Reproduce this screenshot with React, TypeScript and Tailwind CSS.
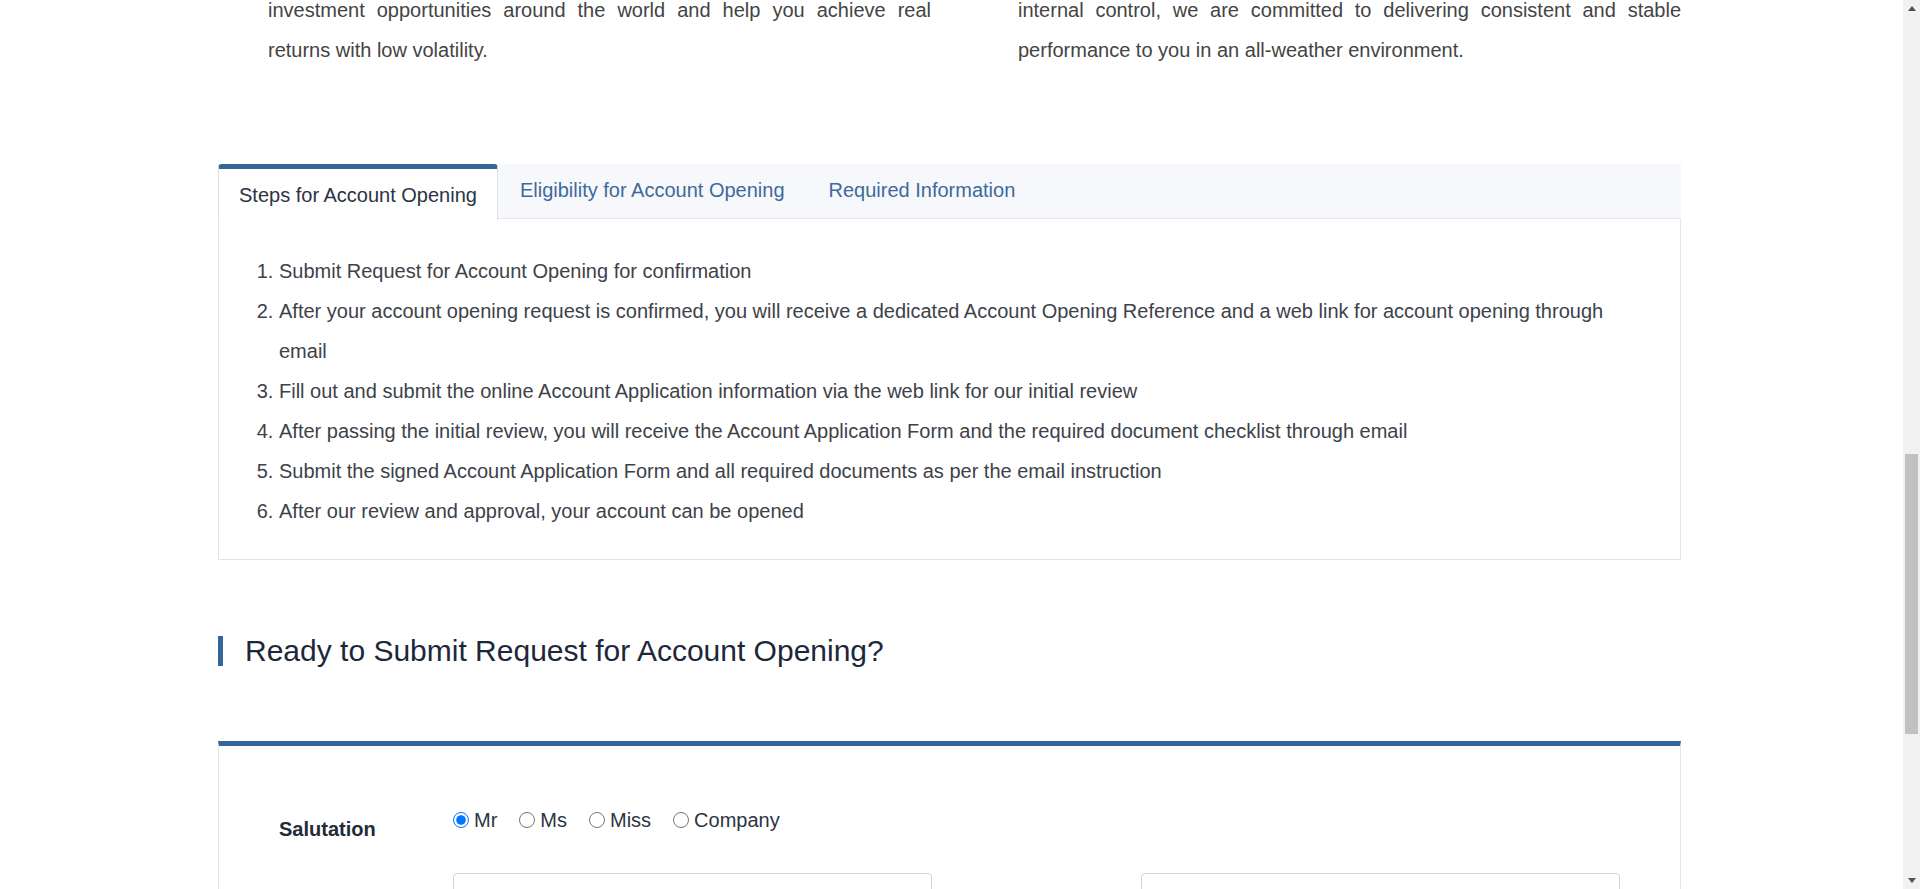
import React, { useState } from 'react';

const steps = [
  'Submit Request for Account Opening for confirmation',
  'After your account opening request is confirmed, you will receive a dedicated Account Opening Reference and a web link for account opening through email',
  'Fill out and submit the online Account Application information via the web link for our initial review',
  'After passing the initial review, you will receive the Account Application Form and the required document checklist through email',
  'Submit the signed Account Application Form and all required documents as per the email instruction',
  'After our review and approval, your account can be opened',
];

const tabs = ['Steps for Account Opening', 'Eligibility for Account Opening', 'Required Information'];
const salutations = ['Mr', 'Ms', 'Miss', 'Company'];

const Scrollbar: React.FC = () => (
  <div className="flex w-[17px] shrink-0 flex-col bg-[#f1f1f1]">
    <div className="flex h-[17px] items-center justify-center">
      <div className="h-0 w-0 border-x-[4px] border-b-[5px] border-x-transparent border-b-[#505050]" />
    </div>
    <div className="flex-1 px-[2px] pt-[437px]">
      <div className="h-[280px] bg-[#c1c1c1]" />
    </div>
    <div className="flex h-[17px] items-center justify-center">
      <div className="h-0 w-0 border-x-[4px] border-t-[5px] border-x-transparent border-t-[#505050]" />
    </div>
  </div>
);

const App: React.FC = () => {
  const [active, setActive] = useState(0);
  const [salutation, setSalutation] = useState('Mr');

  return (
    <div className="flex h-[889px] overflow-hidden bg-white font-['Liberation_Sans',Arial,sans-serif]">
      <main className="flex-1 overflow-hidden">
        <div className="ml-[218px] w-[1463px]">
          {/* intro columns (tail end) */}
          <div className="mt-[-10px] flex justify-between text-[20px] leading-[40px] text-[#444]">
            <div className="ml-[50px] w-[663px]">
              <p className="text-justify [text-align-last:justify]">
                investment opportunities around the world and help you achieve real
              </p>
              <p>returns with low volatility.</p>
            </div>
            <div className="w-[663px]">
              <p className="text-justify [text-align-last:justify]">
                internal control, we are committed to delivering consistent and stable
              </p>
              <p>performance to you in an all-weather environment.</p>
            </div>
          </div>

          {/* tabs */}
          <div className="mt-[94px]">
            <div className="flex h-[55px] items-start border-b border-[#e3e5ea] bg-[#f7f8fb]">
              {tabs.map((t, i) =>
                i === active ? (
                  <button
                    key={t}
                    onClick={() => setActive(i)}
                    className="flex h-[56px] items-center rounded-t-[4px] border-x border-t-[5px] border-x-[#dde0e5] border-t-[#34669a] bg-white px-5 text-[20px] text-[#2b3443]"
                  >
                    {t}
                  </button>
                ) : (
                  <button
                    key={t}
                    onClick={() => setActive(i)}
                    className="flex h-[52px] items-center px-[22px] text-[20px] text-[#3d6a9c]"
                  >
                    {t}
                  </button>
                )
              )}
            </div>
            <div className="border-x border-b border-[#e3e5ea] pt-8 pr-[50px] pb-7 pl-5">
              <ol className="list-decimal pl-10 text-[20px] leading-[40px] text-[#3d424a]">
                {steps.map((s) => (
                  <li key={s}>{s}</li>
                ))}
              </ol>
            </div>
          </div>

          {/* heading */}
          <h2 className="mt-[76px] border-l-[5px] border-[#34669a] pl-[22px] text-[30px] leading-[30px] text-[#1c283a]">
            Ready to Submit Request for Account Opening?
          </h2>

          {/* form */}
          <div className="mt-[75px] border-x border-t-[5px] border-x-[#e3e5ea] border-t-[#34669a] px-[60px] pt-[62px]">
            <div className="flex items-start">
              <div className="mt-[9px] w-[174px] text-[20px] leading-[24px] font-bold text-[#222b38]">
                Salutation
              </div>
              <div className="flex items-center text-[20px] leading-[24px] text-[#2b3443]">
                {salutations.map((s) => (
                  <label key={s} className="mr-[22px] flex items-center gap-[5px]">
                    <input
                      type="radio"
                      name="salutation"
                      checked={salutation === s}
                      onChange={() => setSalutation(s)}
                      className="m-0 h-4 w-4"
                    />
                    {s}
                  </label>
                ))}
              </div>
            </div>
            <div className="mt-[32px] flex justify-between">
              <div className="ml-[174px] h-[46px] w-[479px] rounded-[4px] border border-[#cfd2d6]" />
              <div className="h-[46px] w-[479px] rounded-[4px] border border-[#cfd2d6]" />
            </div>
          </div>
        </div>
      </main>
      <Scrollbar />
    </div>
  );
};

export default App;
